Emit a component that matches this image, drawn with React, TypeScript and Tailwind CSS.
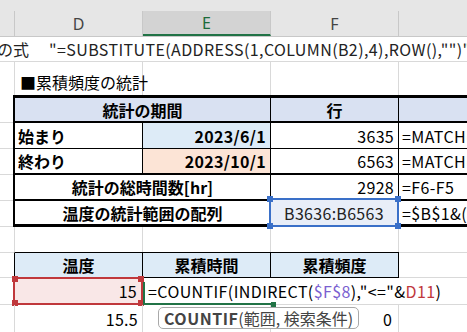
const grid = 'border-[#d9d9d9]';

function Handle({ pos, color }: { pos: string; color: string }) {
    return <div className={`absolute w-[6px] h-[6px] ${pos} ${color}`}></div>;
}

export default function App() {
    return (
        <div className="w-[467px] h-[332px] overflow-hidden bg-white text-[16px] leading-none text-black font-['Noto_Sans_CJK_JP',sans-serif]">
            {/* ribbon edge */}
            <div className="h-[11px] bg-[#e6e6e6]"></div>

            {/* column letters */}
            <div className="flex h-[26px] bg-[#e6e6e6] text-[#444] border-b border-[#c8c8c8] font-['Noto_Sans',sans-serif]">
                <div className="w-[15px] shrink-0 border-r border-[#c8c8c8]"></div>
                <div className="w-[128px] shrink-0 border-r border-[#c8c8c8] flex items-center justify-center">D</div>
                <div className="w-[128px] shrink-0 border-r border-[#c8c8c8] border-b-2 border-b-[#217346] bg-[#d3d3d3] text-[#1d6b3a] flex items-center justify-center">E</div>
                <div className="w-[128px] shrink-0 border-r border-[#c8c8c8] flex items-center justify-center">F</div>
                <div className="flex-1"></div>
            </div>

            {/* row with the spilled formula text */}
            <div className={`h-[25px] border-b ${grid} flex items-center whitespace-nowrap text-[#222]`}>
                <span className="-ml-[3px]">の式</span>
                <span className="ml-[20px] tracking-[0.4px]">{'"=SUBSTITUTE(ADDRESS(1,COLUMN(B2),4),ROW(),"")"'}</span>
            </div>

            {/* title row */}
            <div className="flex h-[33px]">
                <div className={`w-[15px] shrink-0 border-r ${grid}`}></div>
                <div className={`w-[128px] shrink-0 border-r ${grid} flex items-end pb-[5px] pl-[5px] whitespace-nowrap`}>■累積頻度の統計</div>
                <div className={`w-[128px] shrink-0 border-r ${grid}`}></div>
                <div className={`w-[128px] shrink-0 border-r ${grid}`}></div>
                <div className="flex-1"></div>
            </div>

            {/* period table */}
            <div className="flex">
                <div className="w-[13px] shrink-0 flex flex-col">
                    <div className={`h-[28px] border-b ${grid}`}></div>
                    <div className={`h-[26px] border-b ${grid}`}></div>
                    <div className={`h-[26px] border-b ${grid}`}></div>
                    <div className={`h-[26px] border-b ${grid}`}></div>
                    <div className={`h-[26px] border-b ${grid}`}></div>
                </div>
                <div className="flex-1 border-l-2 border-t-[3px] border-b-[3px] border-black">
                    <div className="flex h-[25px] border-b-2 border-black bg-[#d9e1f2] font-bold">
                        <div className="w-[256px] shrink-0 border-r border-black flex items-center justify-center">統計の期間</div>
                        <div className="w-[128px] shrink-0 border-r border-black flex items-center justify-center">行</div>
                        <div className="flex-1"></div>
                    </div>
                    <div className="flex h-[26px] border-b border-black">
                        <div className="w-[128px] shrink-0 border-r border-black flex items-center pl-[3px] font-bold">始まり</div>
                        <div className="w-[128px] shrink-0 border-r border-black bg-[#ddebf7] flex items-center justify-end pr-[4px] font-bold tracking-[0.3px]">2023/6/1</div>
                        <div className="w-[128px] shrink-0 border-r border-black flex items-center justify-end pr-[4px] tracking-[0.3px]">3635</div>
                        <div className="flex-1 flex items-center pl-[3px] whitespace-nowrap overflow-hidden tracking-[0.4px]">=MATCH(D5,A:A,0)</div>
                    </div>
                    <div className="flex h-[26px] border-b-2 border-black">
                        <div className="w-[128px] shrink-0 border-r border-black flex items-center pl-[3px] font-bold">終わり</div>
                        <div className="w-[128px] shrink-0 border-r border-black bg-[#fce4d6] flex items-center justify-end pr-[4px] font-bold tracking-[0.3px]">2023/10/1</div>
                        <div className="w-[128px] shrink-0 border-r border-black flex items-center justify-end pr-[4px] tracking-[0.3px]">6563</div>
                        <div className="flex-1 flex items-center pl-[3px] whitespace-nowrap overflow-hidden tracking-[0.4px]">=MATCH(D6,A:A,0)</div>
                    </div>
                    <div className="flex h-[26px] border-b-2 border-black">
                        <div className="w-[256px] shrink-0 border-r border-black flex items-center justify-center font-bold">統計の総時間数[hr]</div>
                        <div className="w-[128px] shrink-0 border-r border-black flex items-center justify-end pr-[4px] tracking-[0.3px]">2928</div>
                        <div className="flex-1 flex items-center pl-[3px] whitespace-nowrap overflow-hidden tracking-[0.4px]">=F6-F5</div>
                    </div>
                    <div className="flex h-[23px]">
                        <div className="w-[256px] shrink-0 border-r border-black flex items-center justify-center font-bold">温度の統計範囲の配列</div>
                        <div className="w-[128px] shrink-0 border-r border-black relative">
                            <div className="absolute -left-[2px] -top-[3px] w-[130px] h-[29px] border-2 border-[#3a70c8] bg-[#e8eef8] flex items-center justify-center text-[#222] tracking-[0.3px]">
                                B3636:B6563
                                <Handle pos="-left-[4px] -top-[4px]" color="bg-[#3a70c8]" />
                                <Handle pos="-right-[4px] -top-[4px]" color="bg-[#3a70c8]" />
                                <Handle pos="-left-[4px] -bottom-[4px]" color="bg-[#3a70c8]" />
                                <Handle pos="-right-[4px] -bottom-[4px]" color="bg-[#3a70c8]" />
                            </div>
                        </div>
                        <div className="flex-1 flex items-center pl-[3px] whitespace-nowrap overflow-hidden tracking-[0.4px]">{'=$B$1&(F5+1)&":"&$B$1&(F6+1)'}</div>
                    </div>
                </div>
            </div>

            {/* empty row */}
            <div className="flex h-[25px]">
                <div className={`w-[15px] shrink-0 border-r ${grid}`}></div>
                <div className={`w-[128px] shrink-0 border-r ${grid}`}></div>
                <div className={`w-[128px] shrink-0 border-r ${grid}`}></div>
                <div className={`w-[128px] shrink-0 border-r ${grid}`}></div>
                <div className="flex-1"></div>
            </div>

            {/* frequency table header */}
            <div className="flex h-[26px]">
                <div className={`w-[15px] shrink-0 border-y ${grid} border-r border-r-black`}></div>
                <div className="w-[128px] shrink-0 border-y border-r border-black bg-[#ddebf7] flex items-center justify-center font-bold">温度</div>
                <div className="w-[128px] shrink-0 border-y border-r border-black bg-[#ddebf7] flex items-center justify-center font-bold">累積時間</div>
                <div className="w-[128px] shrink-0 border-y border-r border-black bg-[#ddebf7] flex items-center justify-center font-bold">累積頻度</div>
                <div className={`flex-1 border-y ${grid}`}></div>
            </div>

            {/* row being edited */}
            <div className={`flex h-[27px] border-b ${grid}`}>
                <div className={`w-[15px] shrink-0 border-r ${grid}`}></div>
                <div className="w-[128px] shrink-0 relative">
                    <div className="absolute -left-[2px] -top-[1px] w-[130px] h-[28px] border-2 border-[#c0383c] bg-[#f9e7e7] flex items-center justify-end pr-[4px] tracking-[0.3px]">
                        15
                        <Handle pos="-left-[3px] -top-[3px]" color="bg-[#c0383c]" />
                        <Handle pos="-right-[3px] -top-[3px]" color="bg-[#c0383c]" />
                        <Handle pos="-left-[3px] -bottom-[3px]" color="bg-[#c0383c]" />
                        <Handle pos="-right-[3px] -bottom-[3px]" color="bg-[#c0383c]" />
                    </div>
                </div>
                <div className="flex-1 relative flex items-center pl-[5px] whitespace-nowrap tracking-[0.4px]">
                    <div className="absolute left-0 top-[4px] w-[130px] h-[23px] border-l-2 border-b-2 border-[#217346]">
                        <div className="absolute -right-[3px] -bottom-[4px] w-[5px] h-[5px] bg-[#217346]"></div>
                    </div>
                    =COUNTIF(INDIRECT(<span className="text-[#7a5fd0]">$F$8</span>),"&lt;="&amp;<span className="text-[#c0383c]">D11</span>)
                </div>
            </div>

            {/* next row with the function tooltip */}
            <div className="flex h-[27px] relative">
                <div className={`w-[15px] shrink-0 border-r ${grid}`}></div>
                <div className={`w-[128px] shrink-0 border-r ${grid} flex items-center justify-end pr-[4px] tracking-[0.3px]`}>15.5</div>
                <div className={`w-[128px] shrink-0 border-r ${grid}`}></div>
                <div className={`w-[128px] shrink-0 border-r ${grid} flex items-center justify-end pr-[6px]`}>0</div>
                <div className="flex-1"></div>
                <div className="absolute left-[158px] top-[2px] h-[22px] px-[5px] rounded-[5px] border border-[#a9a9a9] bg-white flex items-center whitespace-nowrap text-[16px] text-[#444]">
                    <span className="font-bold tracking-[0.5px]">COUNTIF</span>(範囲, 検索条件)
                </div>
            </div>
        </div>
    );
}
